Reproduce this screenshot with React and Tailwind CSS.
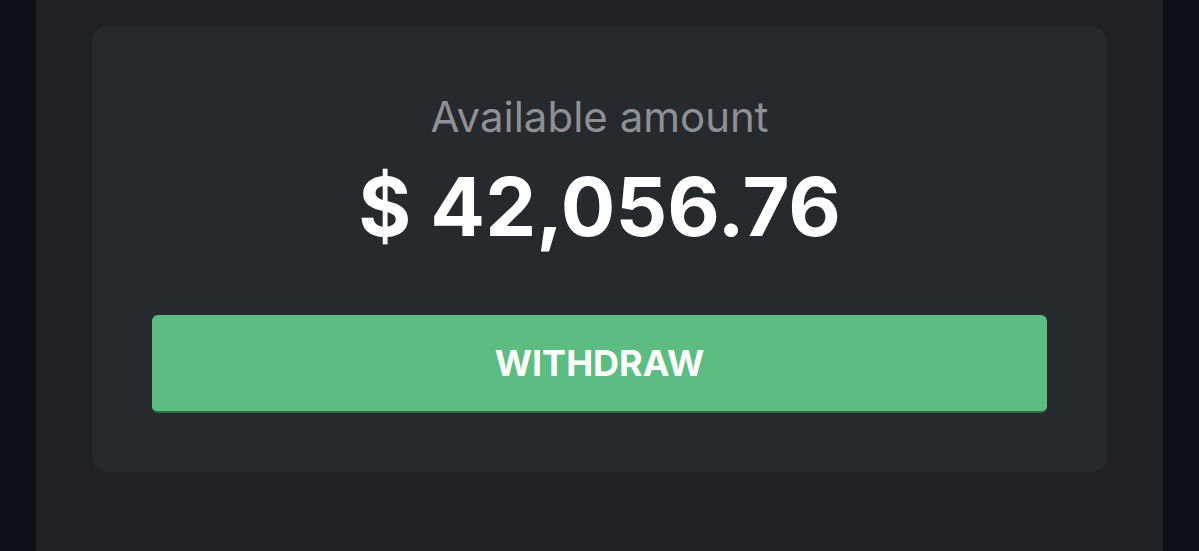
export default function App() {
  return (
    <div className="flex h-[551px] w-full justify-center bg-[#0b0f17] px-[36px] font-['Inter',sans-serif]">
      <div className="w-full bg-[#1f2125] px-[56px] pt-[26px]">
        <div className="flex flex-col items-center rounded-[16px] bg-[#26292e] px-[60px] pb-[59px] pt-[67px]">
          <p className="text-[42px] leading-[48px] text-[#8e9095]">Available amount</p>
          <p className="mt-[26px] text-[81px] font-bold leading-[81px] text-white">$ 42,056.76</p>
          <button className="mt-[67px] flex h-[98px] w-full items-center justify-center rounded-[6px] border-b-2 border-[#2c6e43] bg-[#5dbc81] text-[36px] font-bold text-white">
            WITHDRAW
          </button>
        </div>
      </div>
    </div>
  );
}
